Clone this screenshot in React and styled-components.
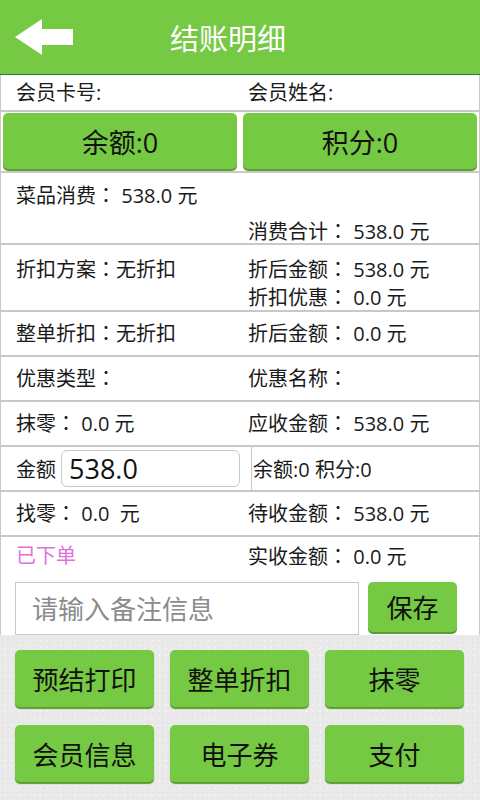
import styled, { createGlobalStyle } from "styled-components";

const font = `"Open Sans", "Noto Sans CJK SC", sans-serif`;
const green = "#76c943";

const GlobalStyle = createGlobalStyle`
  html, body {
    margin: 0;
    padding: 0;
    background: #ffffff;
  }
  body {
    font-family: ${font};
    color: #1a1a1a;
  }
  * {
    box-sizing: border-box;
  }
`;

// label with a centred full-width colon, as the old android fallback font drew it
function Field({ label, value = "" }) {
  return (
    <Cell>
      {label}
      <Colon>：</Colon>
      {value}
    </Cell>
  );
}

export default function App() {
  return (
    <>
      <GlobalStyle />
      <Page>
        <Header>
          <BackIcon width="58" height="36" viewBox="0 0 58 36">
            <polygon points="0,18 27,0 27,10 58,10 58,26 27,26 27,36" fill="#fff" />
          </BackIcon>
          <Title>结账明细</Title>
        </Header>

        <Sheet>
          <Row $height={37}>
            <Cell>会员卡号:</Cell>
            <Cell>会员姓名:</Cell>
          </Row>

          <ButtonRow>
            <BigButton>余额:0</BigButton>
            <BigButton>积分:0</BigButton>
          </ButtonRow>

          <Row $height={72} $lines={36} $top={4}>
            <Field label="菜品消费" value=" 538.0 元" />
            <Cell />
            <Cell />
            <Field label="消费合计" value=" 538.0 元" />
          </Row>

          <Row $height={67} $lines={28} $top={10}>
            <Field label="折扣方案" value="无折扣" />
            <Field label="折后金额" value=" 538.0 元" />
            <Cell />
            <Field label="折扣优惠" value=" 0.0 元" />
          </Row>

          <Row $height={45}>
            <Field label="整单折扣" value="无折扣" />
            <Field label="折后金额" value=" 0.0 元" />
          </Row>

          <Row $height={45}>
            <Field label="优惠类型" />
            <Field label="优惠名称" />
          </Row>

          <Row $height={45}>
            <Field label="抹零" value=" 0.0 元" />
            <Field label="应收金额" value=" 538.0 元" />
          </Row>

          <AmountRow>
            <AmountLeft>
              <span>金额</span>
              <AmountInput defaultValue="538.0" />
            </AmountLeft>
            <AmountRight>余额:0 积分:0</AmountRight>
          </AmountRow>

          <Row $height={45}>
            <Field label="找零" value=" 0.0  元" />
            <Field label="待收金额" value=" 538.0 元" />
          </Row>

          <Row $height={38} $plain>
            <Cell $pink>已下单</Cell>
            <Field label="实收金额" value=" 0.0 元" />
          </Row>

          <NoteRow>
            <NoteInput placeholder="请输入备注信息" />
            <SaveButton>保存</SaveButton>
          </NoteRow>
        </Sheet>

        <Actions>
          <ActionButton>预结打印</ActionButton>
          <ActionButton>整单折扣</ActionButton>
          <ActionButton>抹零</ActionButton>
          <ActionButton>会员信息</ActionButton>
          <ActionButton>电子券</ActionButton>
          <ActionButton>支付</ActionButton>
        </Actions>
      </Page>
    </>
  );
}

const Page = styled.div`
  width: 480px;
  height: 800px;
  display: flex;
  flex-direction: column;
  overflow: hidden;
`;

const Header = styled.div`
  height: 75px;
  flex: none;
  background: ${green};
  border-bottom: 1px solid #1f7d33;
  display: grid;
  grid-template-columns: 90px 1fr 90px;
  align-items: center;
`;

const BackIcon = styled.svg`
  margin-left: 15px;
  margin-top: -1px;
`;

const Title = styled.h1`
  margin: 0 24px 0 0;
  text-align: center;
  color: #fff;
  font-size: 29px;
  font-weight: 400;
`;

const Sheet = styled.div`
  flex: none;
  border-left: 1px solid #c8c8c8;
  border-right: 1px solid #c8c8c8;
  background: #fff;
`;

const Row = styled.div`
  height: ${(p) => p.$height}px;
  padding: ${(p) => p.$top || 0}px 0 0 15px;
  display: grid;
  grid-template-columns: 232px 1fr;
  grid-auto-rows: ${(p) => (p.$lines ? `${p.$lines}px` : "1fr")};
  align-items: center;
  align-content: start;
  border-bottom: ${(p) => (p.$plain ? "none" : "2px solid #c8c8c8")};
  font-size: 20px;
`;

const Cell = styled.div`
  white-space: pre;
  line-height: 1.2;
  color: ${(p) => (p.$pink ? "#e070dc" : "#1a1a1a")};
`;

const Colon = styled.span`
  font-family: "Noto Sans CJK TC", sans-serif;
`;

const ButtonRow = styled.div`
  height: 61px;
  padding: 1px 2px 0 2px;
  display: grid;
  grid-template-columns: 1fr 1fr;
  gap: 6px;
  border-bottom: 2px solid #c8c8c8;
`;

const BigButton = styled.button`
  height: 56px;
  border: none;
  border-radius: 5px;
  background: ${green};
  box-shadow: 0 2px 0 #5a9c34;
  font-family: ${font};
  font-size: 27px;
  color: #111;
  padding: 0;
`;

const AmountRow = styled.div`
  height: 45px;
  display: flex;
  border-bottom: 2px solid #c8c8c8;
  font-size: 20px;
`;

const AmountLeft = styled.div`
  width: 251px;
  padding-left: 15px;
  display: flex;
  align-items: center;
  gap: 5px;
  border-right: 1px solid #c8c8c8;
`;

const AmountInput = styled.input`
  width: 179px;
  height: 37px;
  border: 1px solid #c8c8c8;
  border-radius: 6px;
  padding: 0 0 0 7px;
  font-family: ${font};
  font-size: 27px;
  color: #111;
  outline: none;
`;

const AmountRight = styled.div`
  display: flex;
  align-items: center;
  padding-left: 1px;
  font-size: 20px;
`;

const NoteRow = styled.div`
  height: 60px;
  padding: 7px 0 0 14px;
  display: flex;
  gap: 9px;
  align-items: flex-start;
`;

const NoteInput = styled.input`
  width: 344px;
  height: 53px;
  border: 1px solid #c8c8c8;
  padding: 0 0 0 16px;
  font-family: ${font};
  font-size: 26px;
  outline: none;
  &::placeholder {
    color: #8c8c8c;
  }
`;

const SaveButton = styled.button`
  width: 89px;
  height: 50px;
  border: none;
  border-radius: 5px;
  background: ${green};
  box-shadow: 0 2px 0 #5a9c34;
  font-family: ${font};
  font-size: 26px;
  color: #111;
  padding: 0;
`;

const Actions = styled.div`
  flex: 1;
  background-color: #eaeaea;
  background-image: radial-gradient(rgba(0, 0, 0, 0.025) 1px, transparent 1px),
    radial-gradient(rgba(255, 255, 255, 0.45) 1px, transparent 1px);
  background-size: 5px 5px, 7px 7px;
  background-position: 0 0, 2px 3px;
  padding: 15px 15px 0 15px;
  display: grid;
  grid-template-columns: repeat(3, 139px);
  grid-auto-rows: 57px;
  column-gap: 16px;
  row-gap: 18px;
`;

const ActionButton = styled.button`
  border: none;
  border-radius: 5px;
  background: ${green};
  box-shadow: 0 2px 1px #5a9c34;
  font-family: ${font};
  font-size: 26px;
  color: #111;
  padding: 0;
`;
